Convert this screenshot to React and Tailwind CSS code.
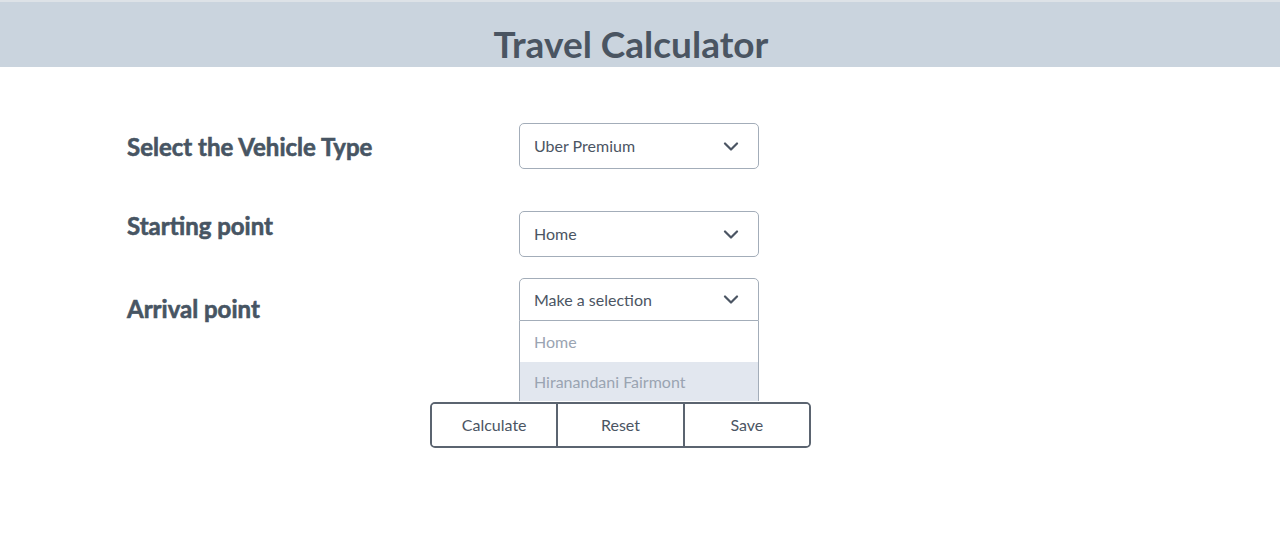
import React from "react";

function Chevron() {
  return (
    <svg width="16" height="9" viewBox="0 0 16 9" fill="none" className="shrink-0">
      <path d="M2 1.5l6 6 6-6" stroke="#4b5563" strokeWidth="2.2" strokeLinecap="round" strokeLinejoin="round" />
    </svg>
  );
}

function SelectBox({ value }) {
  return (
    <div className="w-[240px] h-[46px] border border-[#a3adb9] rounded-[5px] bg-white flex items-center justify-between pl-[14px] pr-[19px]">
      <span className="text-[16px] text-[#4b5563]">{value}</span>
      <Chevron />
    </div>
  );
}

export default function App() {
  return (
    <div className="w-[1280px] h-[550px] bg-white font-['Lato',sans-serif] text-[#475563]">
      <header className="h-[67px] bg-[#cad4de] border-t-2 border-[#dde2e7] flex justify-center pt-[20px] pr-[18px]">
        <h1 className="text-[37px] font-bold leading-[1.2] text-[#4a5562]">Travel Calculator</h1>
      </header>

      <div className="flex">
        <div className="w-[519px] pl-[127px] flex flex-col">
          <div className="mt-[65px] text-[24px] leading-[29px] font-bold [-webkit-text-stroke:0.6px_#475563]">Select the Vehicle Type</div>
          <div className="mt-[50px] text-[24px] leading-[29px] font-bold [-webkit-text-stroke:0.6px_#475563]">Starting point</div>
          <div className="mt-[54px] text-[24px] leading-[29px] font-bold [-webkit-text-stroke:0.6px_#475563]">Arrival point</div>
        </div>
        <div className="flex flex-col pt-[56px]">
          <SelectBox value="Uber Premium" />
          <div className="mt-[42px]">
            <SelectBox value="Home" />
          </div>
          <div className="mt-[21px] w-[240px]">
            <div className="h-[43px] border border-[#a3adb9] rounded-t-[5px] bg-white flex items-center justify-between pl-[14px] pr-[19px]">
              <span className="text-[16px] text-[#4b5563]">Make a selection</span>
              <Chevron />
            </div>
            <div className="border-x border-[#a3adb9]">
              <div className="h-[41px] flex items-center pl-[14px] text-[16px] text-[#9aa4b2]">Home</div>
              <div className="h-[39px] flex items-center pl-[14px] text-[16px] text-[#9aa4b2] bg-[#e2e7ef]">Hiranandani Fairmont</div>
            </div>
          </div>
        </div>
      </div>

      <div className="pl-[430px] mt-[1px]">
        <div className="w-[381px] h-[46px] flex border-2 border-[#5b6470] rounded-[5px] overflow-hidden">
          <button className="flex-1 text-[16px] text-[#4b5563] bg-white">Calculate</button>
          <button className="flex-1 text-[16px] text-[#4b5563] bg-white border-l-2 border-[#5b6470]">Reset</button>
          <button className="flex-1 text-[16px] text-[#4b5563] bg-white border-l-2 border-[#5b6470]">Save</button>
        </div>
      </div>
    </div>
  );
}
